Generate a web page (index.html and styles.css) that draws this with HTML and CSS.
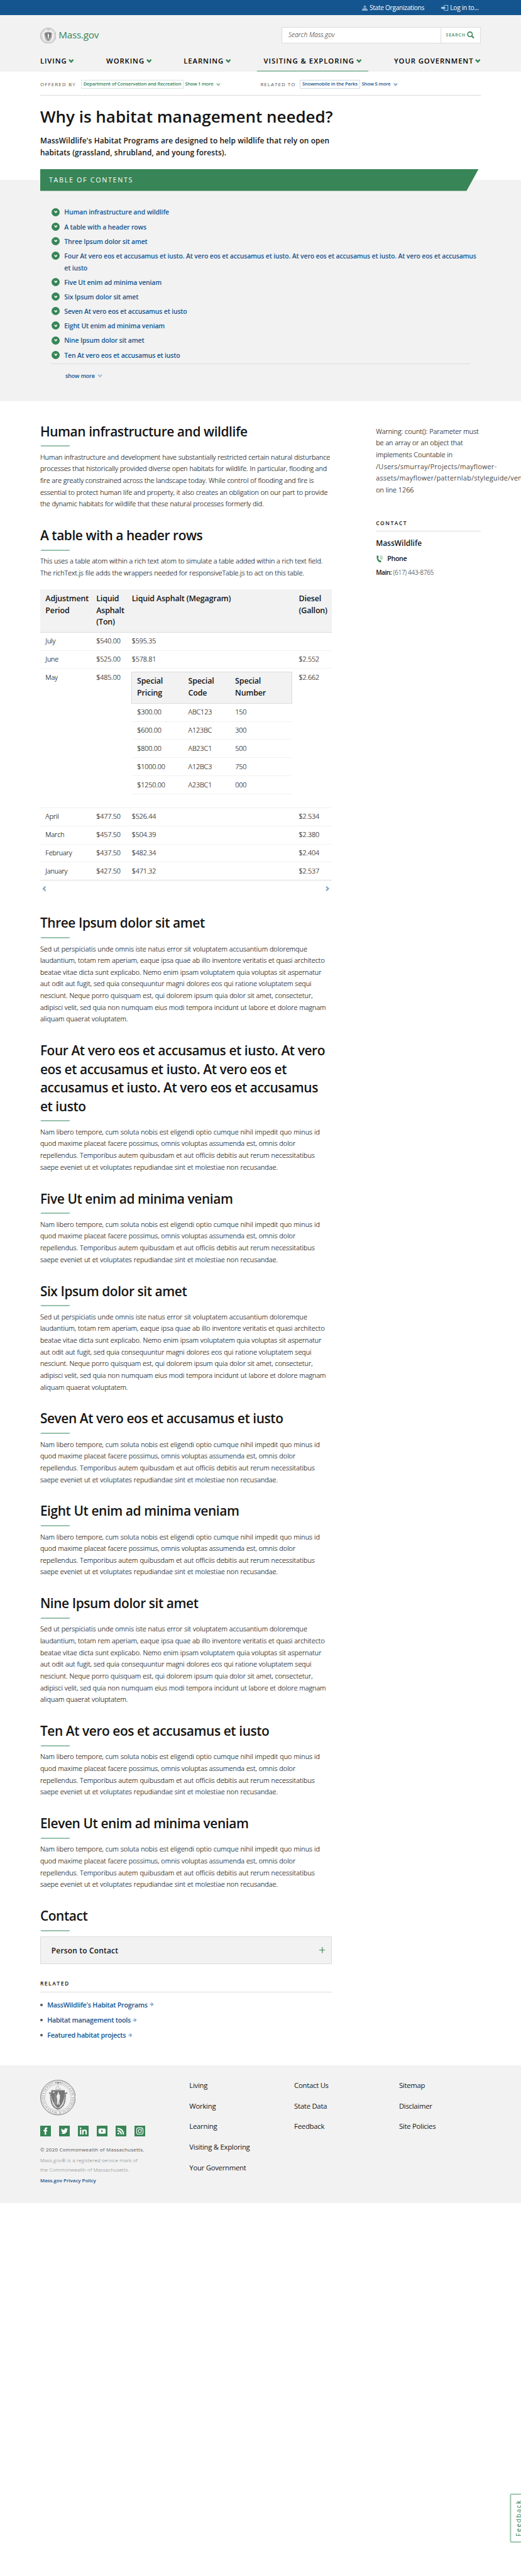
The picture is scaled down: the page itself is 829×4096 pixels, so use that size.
FILE: index.html
```html
<!DOCTYPE html>
<html lang="en">
<head>
<meta charset="utf-8">
<title>Why is habitat management needed? | Mass.gov</title>
<link rel="stylesheet" href="styles.css">
</head>
<body>
<svg class="sprite" aria-hidden="true">
  <symbol id="chev" viewBox="0 0 15 11"><path d="M0 2.6 3.2 0 7.5 4.4 11.8 0 15 2.6 7.5 11z"/></symbol>
  <symbol id="arrow" viewBox="0 0 20 18"><path d="M0 7h10L6.500 3.500 9.500 0 20 9 9.500 18l-3-3.500L10 11H0z"/></symbol>
</svg>

<div class="topbar">
  <a class="topbar-org"><svg viewBox="0 0 16 16"><path d="M7.500 0h1v2h-1zM5 5.500Q5 2 8 2t3 3.500zM4 6h8v1.300H4zM4 8h8v2H4zM1 10.800h14v1.500H1zM0 12.800h16V16H0z"/><path d="M6 8v2M8 8v2M10 8v2M3 13v2M5.500 13v2M8 13v2M10.500 13v2M13 13v2" stroke="#14558f" stroke-width=".7"/></svg>State Organizations</a>
  <a class="topbar-login"><svg viewBox="0 0 20 16"><path d="M0 5.500h6V2l7 6-7 6v-3.500H0z"/><path d="M8 1h11v14H8" fill="none" stroke="#a9c4dd" stroke-width="1.800"/></svg>Log in to...</a>
</div>

<header class="header">
  <div class="brand-row">
    <a class="brand"><svg viewBox="0 0 100 100"><use href="#seal"/></svg>Mass.gov</a>
    <form class="search"><span class="search-field">Search Mass.gov</span><span class="search-btn">SEARCH<svg viewBox="0 0 21 20"><circle cx="8.500" cy="8" r="6.500" fill="none" stroke="#388557" stroke-width="2.800"/><path d="M13 12.500l6.500 6" stroke="#388557" stroke-width="3.600"/></svg></span></form>
  </div>
  <nav class="nav">
    <a>LIVING<svg class="chev"><use href="#chev"/></svg></a>
    <a>WORKING<svg class="chev"><use href="#chev"/></svg></a>
    <a>LEARNING<svg class="chev"><use href="#chev"/></svg></a>
    <a class="is-active">VISITING &amp; EXPLORING<svg class="chev"><use href="#chev"/></svg></a>
    <a>YOUR GOVERNMENT<svg class="chev"><use href="#chev"/></svg></a>
  </nav>
</header>

<div class="relations">
  <div class="rel rel-offered"><span class="rel-label">OFFERED BY</span><a class="rel-tag">Department of Conservation and Recreation</a><span class="rel-more">Show 1 more</span><svg class="chev"><use href="#chev"/></svg></div>
  <div class="rel rel-to"><span class="rel-label">RELATED TO</span><a class="rel-tag">Snowmobile in the Parks</a><span class="rel-more">Show 5 more</span><svg class="chev"><use href="#chev"/></svg></div>
</div>

<div class="intro">
  <h1>Why is habitat management needed?</h1>
  <p>MassWildlife's Habitat Programs are designed to help wildlife that rely on open<br>habitats (grassland, shrubland, and young forests).</p>
</div>

<section class="toc">
  <h2 class="toc-title">TABLE OF CONTENTS</h2>
  <ul class="toc-list">
    <li><i><svg><use href="#chev"/></svg></i><a>Human infrastructure and wildlife</a></li>
    <li><i><svg><use href="#chev"/></svg></i><a>A table with a header rows</a></li>
    <li><i><svg><use href="#chev"/></svg></i><a>Three Ipsum dolor sit amet</a></li>
    <li><i><svg><use href="#chev"/></svg></i><a>Four At vero eos et accusamus et iusto. At vero eos et accusamus et iusto. At vero eos et accusamus et iusto. At vero eos et accusamus<br>et iusto</a></li>
    <li><i><svg><use href="#chev"/></svg></i><a>Five Ut enim ad minima veniam</a></li>
    <li><i><svg><use href="#chev"/></svg></i><a>Six Ipsum dolor sit amet</a></li>
    <li><i><svg><use href="#chev"/></svg></i><a>Seven At vero eos et accusamus et iusto</a></li>
    <li><i><svg><use href="#chev"/></svg></i><a>Eight Ut enim ad minima veniam</a></li>
    <li><i><svg><use href="#chev"/></svg></i><a>Nine Ipsum dolor sit amet</a></li>
    <li><i><svg><use href="#chev"/></svg></i><a>Ten At vero eos et accusamus et iusto</a></li>
  </ul>
  <a class="toc-more">show more<svg><use href="#chev"/></svg></a>
</section>

<div class="content">
  <main class="main">
    <section>
      <h2>Human infrastructure and wildlife</h2>
      <p class="human">Human infrastructure and development have substantially restricted certain natural disturbance<br>processes that historically provided diverse open habitats for wildlife. In particular, flooding and<br>fire are greatly constrained across the landscape today. While control of flooding and fire is<br>essential to protect human life and property, it also creates an obligation on our part to provide<br>the dynamic habitats for wildlife that these natural processes formerly did.</p>
    </section>
    <section class="table-section">
      <h2>A table with a header rows</h2>
      <p class="human">This uses a table atom within a rich text atom to simulate a table added within a rich text field.<br>The richText.js file adds the wrappers needed for responsiveTable.js to act on this table.</p>
      <table class="prices">
        <thead><tr><th>Adjustment<br>Period</th><th>Liquid<br>Asphalt<br>(Ton)</th><th>Liquid Asphalt (Megagram)</th><th>Diesel<br>(Gallon)</th></tr></thead>
        <tbody>
          <tr><td>July</td><td>$540.00</td><td>$595.35</td><td></td></tr>
          <tr><td>June</td><td>$525.00</td><td>$578.81</td><td>$2.552</td></tr>
          <tr class="tall"><td>May</td><td>$485.00</td><td class="nest">
            <table class="special">
              <thead><tr><th>Special<br>Pricing</th><th>Special<br>Code</th><th>Special<br>Number</th></tr></thead>
              <tbody>
                <tr><td>$300.00</td><td>ABC123</td><td>150</td></tr>
                <tr><td>$600.00</td><td>A123BC</td><td>300</td></tr>
                <tr><td>$800.00</td><td>AB23C1</td><td>500</td></tr>
                <tr><td>$1000.00</td><td>A12BC3</td><td>750</td></tr>
                <tr><td>$1250.00</td><td>A23BC1</td><td>000</td></tr>
              </tbody>
            </table></td><td>$2.662</td></tr>
          <tr><td>April</td><td>$477.50</td><td>$526.44</td><td>$2.534</td></tr>
          <tr><td>March</td><td>$457.50</td><td>$504.39</td><td>$2.380</td></tr>
          <tr><td>February</td><td>$437.50</td><td>$482.34</td><td>$2.404</td></tr>
          <tr><td>January</td><td>$427.50</td><td>$471.32</td><td>$2.537</td></tr>
        </tbody>
      </table>
      <div class="scroller"><svg class="prev"><use href="#chev"/></svg><svg class="next"><use href="#chev"/></svg></div>
    </section>
    <section>
      <h2>Three Ipsum dolor sit amet</h2>
      <p class="sed">Sed ut perspiciatis unde omnis iste natus error sit voluptatem accusantium doloremque<br>laudantium, totam rem aperiam, eaque ipsa quae ab illo inventore veritatis et quasi architecto<br>beatae vitae dicta sunt explicabo. Nemo enim ipsam voluptatem quia voluptas sit aspernatur<br>aut odit aut fugit, sed quia consequuntur magni dolores eos qui ratione voluptatem sequi<br>nesciunt. Neque porro quisquam est, qui dolorem ipsum quia dolor sit amet, consectetur,<br>adipisci velit, sed quia non numquam eius modi tempora incidunt ut labore et dolore magnam<br>aliquam quaerat voluptatem.</p>
    </section>
    <section>
      <h2>Four At vero eos et accusamus et iusto. At vero<br>eos et accusamus et iusto. At vero eos et<br>accusamus et iusto. At vero eos et accusamus<br>et iusto</h2>
      <p class="nam">Nam libero tempore, cum soluta nobis est eligendi optio cumque nihil impedit quo minus id<br>quod maxime placeat facere possimus, omnis voluptas assumenda est, omnis dolor<br>repellendus. Temporibus autem quibusdam et aut officiis debitis aut rerum necessitatibus<br>saepe eveniet ut et voluptates repudiandae sint et molestiae non recusandae.</p>
    </section>
    <section>
      <h2>Five Ut enim ad minima veniam</h2>
      <p class="nam">Nam libero tempore, cum soluta nobis est eligendi optio cumque nihil impedit quo minus id<br>quod maxime placeat facere possimus, omnis voluptas assumenda est, omnis dolor<br>repellendus. Temporibus autem quibusdam et aut officiis debitis aut rerum necessitatibus<br>saepe eveniet ut et voluptates repudiandae sint et molestiae non recusandae.</p>
    </section>
    <section>
      <h2>Six Ipsum dolor sit amet</h2>
      <p class="sed">Sed ut perspiciatis unde omnis iste natus error sit voluptatem accusantium doloremque<br>laudantium, totam rem aperiam, eaque ipsa quae ab illo inventore veritatis et quasi architecto<br>beatae vitae dicta sunt explicabo. Nemo enim ipsam voluptatem quia voluptas sit aspernatur<br>aut odit aut fugit, sed quia consequuntur magni dolores eos qui ratione voluptatem sequi<br>nesciunt. Neque porro quisquam est, qui dolorem ipsum quia dolor sit amet, consectetur,<br>adipisci velit, sed quia non numquam eius modi tempora incidunt ut labore et dolore magnam<br>aliquam quaerat voluptatem.</p>
    </section>
    <section>
      <h2>Seven At vero eos et accusamus et iusto</h2>
      <p class="nam">Nam libero tempore, cum soluta nobis est eligendi optio cumque nihil impedit quo minus id<br>quod maxime placeat facere possimus, omnis voluptas assumenda est, omnis dolor<br>repellendus. Temporibus autem quibusdam et aut officiis debitis aut rerum necessitatibus<br>saepe eveniet ut et voluptates repudiandae sint et molestiae non recusandae.</p>
    </section>
    <section>
      <h2>Eight Ut enim ad minima veniam</h2>
      <p class="nam">Nam libero tempore, cum soluta nobis est eligendi optio cumque nihil impedit quo minus id<br>quod maxime placeat facere possimus, omnis voluptas assumenda est, omnis dolor<br>repellendus. Temporibus autem quibusdam et aut officiis debitis aut rerum necessitatibus<br>saepe eveniet ut et voluptates repudiandae sint et molestiae non recusandae.</p>
    </section>
    <section>
      <h2>Nine Ipsum dolor sit amet</h2>
      <p class="sed">Sed ut perspiciatis unde omnis iste natus error sit voluptatem accusantium doloremque<br>laudantium, totam rem aperiam, eaque ipsa quae ab illo inventore veritatis et quasi architecto<br>beatae vitae dicta sunt explicabo. Nemo enim ipsam voluptatem quia voluptas sit aspernatur<br>aut odit aut fugit, sed quia consequuntur magni dolores eos qui ratione voluptatem sequi<br>nesciunt. Neque porro quisquam est, qui dolorem ipsum quia dolor sit amet, consectetur,<br>adipisci velit, sed quia non numquam eius modi tempora incidunt ut labore et dolore magnam<br>aliquam quaerat voluptatem.</p>
    </section>
    <section>
      <h2>Ten At vero eos et accusamus et iusto</h2>
      <p class="nam">Nam libero tempore, cum soluta nobis est eligendi optio cumque nihil impedit quo minus id<br>quod maxime placeat facere possimus, omnis voluptas assumenda est, omnis dolor<br>repellendus. Temporibus autem quibusdam et aut officiis debitis aut rerum necessitatibus<br>saepe eveniet ut et voluptates repudiandae sint et molestiae non recusandae.</p>
    </section>
    <section>
      <h2>Eleven Ut enim ad minima veniam</h2>
      <p class="nam">Nam libero tempore, cum soluta nobis est eligendi optio cumque nihil impedit quo minus id<br>quod maxime placeat facere possimus, omnis voluptas assumenda est, omnis dolor<br>repellendus. Temporibus autem quibusdam et aut officiis debitis aut rerum necessitatibus<br>saepe eveniet ut et voluptates repudiandae sint et molestiae non recusandae.</p>
    </section>
    <section>
      <h2>Contact</h2>
      <div class="accordion">Person to Contact<svg viewBox="0 0 17 17"><path d="M8.500 0v17M0 8.500h17" stroke="#388557" stroke-width="2"/></svg></div>
    </section>
    <h3 class="related-title">RELATED</h3>
    <ul class="related">
      <li><a>MassWildlife's Habitat Programs<svg><use href="#arrow"/></svg></a></li>
      <li><a>Habitat management tools<svg><use href="#arrow"/></svg></a></li>
      <li><a>Featured habitat projects<svg><use href="#arrow"/></svg></a></li>
    </ul>
  </main>
  <aside class="side">
    <p>Warning: count(): Parameter must<br>be an array or an object that<br>implements Countable in<br><span class="path">/Users/smurray/Projects/mayflower-<br>assets/mayflower/patternlab/styleguide/vendor</span><br>on line 1266</p>
    <h3>CONTACT</h3>
    <h4>MassWildlife</h4>
    <h5><svg viewBox="0 0 19 20"><path d="M1 1.500Q3-.5 5 1l1.500 4.500-2 1.500q.5 4 4 7l2.500-.5 3 4q-1 2.500-4 2.500Q5 19 2 12 0 6 1 1.500z"/><path d="M10 8q2 .5 1.500 3M10 4.500q5 1 4.800 7M10 1q8.500 1.500 8 11" fill="none" stroke="#388557" stroke-width="1.200"/></svg>Phone</h5>
    <div class="tel"><b>Main:</b> <span>(617) 443-8765</span></div>
  </aside>
</div>

<footer class="footer">
  <div class="foot-brand">
    <svg class="foot-seal" viewBox="0 0 100 100">
      <g id="seal">
        <circle cx="50" cy="50" r="49" fill="none" stroke="#777" stroke-width="1.600"/>
        <circle cx="50" cy="50" r="46.500" fill="none" stroke="#777" stroke-width=".6"/>
        <circle cx="50" cy="50" r="37" fill="none" stroke="#888" stroke-width="1.300" stroke-dasharray="1 .6"/>
        <path id="ring" d="M58.500 11.400A39.500 39.500 0 1 1 41.500 11.400" fill="none"/>
        <text class="seal-text"><textPath href="#ring" textLength="226">SIGILLUM REIPUBLICÆ MASSACHUSETTENSIS</textPath></text>
        <path d="M40 8.500l5-2v1.500h10V6.500l5 2-5 2V9H45v1.500z" fill="#777"/>
        <circle cx="50" cy="8.500" r="2.600" fill="#777"/>
        <path d="M43 26q3-9 7-10 3 3 1 6l8 4" fill="none" stroke="#aaa" stroke-width="1.300"/>
        <path d="M44 27h12" stroke="#777" stroke-width="1.500" stroke-dasharray="3 1.500"/>
        <path d="M31 29h38q1 36-19 51Q30 65 31 29z" fill="#777"/>
        <path d="M25 37l5 1q-1 25 6 34 6 9 14 10 8-1 14-10 7-9 6-34l6-1" fill="none" stroke="#777" stroke-width="4" stroke-dasharray="4 .7"/>
        <path d="M38 32l1 2.200h2.200l-1.700 1.400.6 2.200-2.100-1.300-2.100 1.300.6-2.200-1.700-1.400H37zM50 33l2.500 3-1 3 4 3v12l-2 3 1 13h-3l-1-11-1 11h-3l1-14-2-11 3-4z" fill="#eee"/>
        <path d="M42 40v29" stroke="#ddd" stroke-width=".9"/>
      </g>
    </svg>
    <div class="social">
      <a><svg viewBox="0 0 30 30"><path d="M12.500 25V16H9.500v-4h3V9.500Q12.500 5 17 5h2.700v3.800h-1.800q-1.200 0-1.200 1.400V12h3l-.4 4h-2.600v9z"/></svg></a>
      <a><svg viewBox="0 0 30 30"><path d="M5.500 21.300q3.200.2 5.500-1.700-2.900-.3-3.700-2.800h1.700Q6 15.700 6 12.700l1.700.5Q5.200 11 6.700 8q3.300 3.900 8.200 4.200Q14.500 7 18.700 7q1.700 0 2.900 1.300L24 7.300q-.4 1.400-1.600 2.200l2.200-.6q-.8 1.300-1.900 2.100.1 7-5.300 10.500-5.700 3.400-11.900-.2z"/></svg></a>
      <a><svg viewBox="0 0 30 30"><circle cx="7.500" cy="7" r="2.300"/><path d="M5.600 11h3.800v13.700H5.600zM12 11h3.700v2q1.200-2.200 4-2.200 5.300 0 5.300 6v7.900h-3.900v-7.200q0-3.300-2.400-3.300-2.800 0-2.800 3.400v7.100H12z"/></svg></a>
      <a><svg viewBox="0 0 30 30"><rect x="5" y="8" width="20" height="14.500" rx="4"/><path d="M12.500 11.500v7l6-3.500z" fill="#388557"/></svg></a>
      <a><svg viewBox="0 0 30 30"><circle cx="7.800" cy="22" r="2.600"/><path d="M5.200 13.700q10.200.6 10.800 10.900M5.200 7.500q16.500 1 17 17.100" fill="none" stroke="#fff" stroke-width="3.700"/></svg></a>
      <a><svg viewBox="0 0 30 30"><rect x="6" y="6" width="18" height="18" rx="5" fill="none" stroke="#fff" stroke-width="1.900"/><circle cx="15" cy="15" r="4.400" fill="none" stroke="#fff" stroke-width="1.900"/><circle cx="20" cy="10" r="1.200"/></svg></a>
    </div>
    <p class="copy">© 2020 Commonwealth of Massachusetts.</p>
    <p class="mark">Mass.gov® is a registered service mark of<br>the Commonwealth of Massachusetts.</p>
    <a class="policy">Mass.gov Privacy Policy</a>
  </div>
  <ul class="foot-links"><li>Living</li><li>Working</li><li>Learning</li><li>Visiting &amp; Exploring</li><li>Your Government</li></ul>
  <ul class="foot-links"><li>Contact Us</li><li>State Data</li><li>Feedback</li></ul>
  <ul class="foot-links"><li>Sitemap</li><li>Disclaimer</li><li>Site Policies</li></ul>
</footer>
<a class="feedback">Feedback</a>
</body>
</html>
```
FILE: styles.css
```css
html{font-size:5.654px}
*{box-sizing:border-box;margin:0;padding:0}
body{position:relative;height:4096px;overflow:hidden;background:#fff;color:#141414;font-family:"Open Sans",sans-serif;font-size:1.9rem;white-space:nowrap}
ul{list-style:none}
svg{display:block;flex:none}
.sprite{position:absolute;width:0;height:0}

.topbar{display:grid;grid-template-columns:22.4rem 12rem;padding-left:101.8rem;height:4.3rem;background:#14558f;color:#fff;font-size:1.8rem;line-height:4.5rem;letter-spacing:-.029em}
.topbar a{display:flex;align-items:center}
.topbar svg{fill:#a9c4dd}
.topbar-org svg{width:1.6rem;height:1.6rem;margin-right:.6rem}
.topbar-login svg{width:2rem;height:1.6rem;margin-right:.5rem}

.header{height:15.9rem;padding:3.3rem 0 0 11.3rem;background:#f2f2f2}
.brand-row{display:flex;justify-content:space-between;width:124rem;height:4.6rem}
.brand{display:flex;color:#388557;font-size:2.7rem;line-height:4.3rem;letter-spacing:-.0156em}
.brand svg{width:4.5rem;height:4.5rem;margin:.1rem .7rem 0 0}
.search{display:flex;width:56rem;border:.2rem solid #dcdcdc;background:#fff;line-height:4.2rem}
.search-field{flex:1;padding-left:1.7rem;font-size:1.8rem;font-weight:300;font-style:italic;letter-spacing:.005em}
.search-btn{display:flex;align-items:center;width:11.2rem;padding-left:1.4rem;border-left:.2rem solid #dcdcdc;color:#388557;font-size:1.2rem;font-weight:600;letter-spacing:.133em}
.search-btn svg{width:2.1rem;height:2rem;margin-left:.4rem}
.nav{display:grid;grid-template-columns:18.6rem 21.8rem 22.5rem 36.7rem 25rem;padding-top:3.9rem}
.nav a{position:relative;display:flex;align-items:center;color:#000;font-size:2rem;font-weight:600;line-height:2rem;letter-spacing:.082em}
.nav .chev{width:1.5rem;height:1.1rem;margin-left:.5rem;fill:#388557}
.nav .is-active{letter-spacing:.0895em}
.is-active::after{content:"";position:absolute;left:-1.8rem;top:3.8rem;width:31.3rem;height:.3rem;background:#97c1aa;transform:skewX(-20deg)}

.relations{display:flex;width:124rem;height:6.7rem;margin-left:11.3rem;padding-top:2.3rem;border-bottom:.2rem solid #dcdcdc;font-size:1.35rem}
.rel{display:flex;height:2.5rem}
.rel-offered{width:62rem}
.rel-label{width:11.5rem;color:#535353;font-size:1.4rem;line-height:2.700rem;letter-spacing:.146em}
.rel-to .rel-label{width:11.1rem;letter-spacing:.133em}
.rel-tag{display:block;width:28.8rem;padding-left:.5rem;border:.2rem solid #d5e6dc;color:#388557;font-weight:600;line-height:2.1rem;letter-spacing:-.023em}
.rel-to .rel-tag{width:16.9rem;border-color:#cddce9;letter-spacing:-.017em}
.rel-more{width:8.7rem;margin-left:.5rem;color:#388557;font-weight:600;line-height:2.4rem;letter-spacing:-.036em}
.rel-to .rel-tag,.rel-to .rel-more{color:#14558f}
.rel-to .rel-more{width:9rem;letter-spacing:-.022em}
.rel .chev{width:1.2rem;height:.9rem;margin-top:.8rem;fill:#97c1aa}
.rel-to .chev{fill:#89aac7}

.intro{height:20.6rem;padding:4rem 0 0 11.3rem}
.intro h1{font-size:4.6rem;font-weight:600;line-height:3.600rem}
.intro p{margin-top:3.350rem;font-size:2.1rem;font-weight:600;line-height:3.3rem;letter-spacing:.01em}

.toc{height:65.3rem;background:linear-gradient(#fff 3rem,#f2f2f2 3rem)}
.toc-title{width:123.4rem;height:6.2rem;margin-left:11.3rem;padding-left:2.5rem;background:#388557;clip-path:polygon(0 0,100% 0,120rem 100%,0 100%);color:#fff;font-size:1.9rem;font-weight:400;line-height:6.3rem;letter-spacing:.156em}
.toc-list{width:117.8rem;margin-left:14.4rem;padding:4rem 0 .2rem;border-bottom:.2rem solid #dcdcdc}
.toc-list li{display:flex;padding:.4rem 0}
.toc-list i{display:grid;place-items:center;flex:none;width:2.300rem;height:2.300rem;margin:.4rem 1.3rem 0 .1rem;border-radius:50%;background:#388557}
.toc-list svg{width:1rem;height:.75rem;fill:#fff}
.toc-list a{color:#14558f;font-size:1.85rem;font-weight:600;line-height:3.3rem;letter-spacing:-.0145em}
.toc-more{display:flex;align-items:center;margin:2.150rem 0 0 18.4rem;color:#14558f;font-size:1.6rem;font-weight:600;line-height:2.4rem;letter-spacing:-.022em}
.toc-more svg{width:1.4rem;height:1rem;margin:.3rem 0 0 .8rem;fill:#abc3d8}

.content{display:flex;gap:12.5rem;height:468.1rem;padding:5.83rem 0 0 11.3rem}
.main{flex:none;width:82rem}
.main h2{padding-top:.15rem;font-size:3.7rem;font-weight:600;line-height:5.2rem;letter-spacing:-.02em}
.main h2::after{content:"";display:block;width:8.2rem;height:.3rem;margin:1.25rem 0 1.4rem .2rem;background:#97c1aa;transform:skewX(-25deg)}
.main p{padding-bottom:4.5rem;font-weight:300;line-height:3.3rem}
.main p,.side p,.prices td{-webkit-text-stroke:.15px #141414}
.human{letter-spacing:-.001em}
.sed{letter-spacing:.0025em}
.nam{letter-spacing:.0045em}

.table-section{height:109rem}
.main .table-section p{padding-bottom:2.960rem}
.prices,.special,.prices thead,.prices tbody{display:block}
.prices tr{display:grid;grid-template-columns:14.3rem 10rem 47rem 10.7rem;height:5.1rem;border-bottom:.2rem solid #f2f2f2}
.prices thead tr{height:12.1rem;border-bottom:.3rem solid #dcdcdc;background:#f2f2f2}
.prices th{padding:1rem 0 0 1.5rem;font-size:2.2rem;font-weight:600;line-height:3.3rem;letter-spacing:-.0105em;text-align:left}
.prices td{padding:.8rem 0 0 1.5rem;font-weight:300;line-height:3.3rem;letter-spacing:-.01em}
.prices .tall{height:39.2rem}
.prices tbody tr:last-child{border-color:#dcdcdc}
.prices .nest{padding:.8rem 0 0 1.3rem}
.special{width:45.3rem}
.prices .special tr{grid-template-columns:14.4rem 13.2rem 15rem;margin:0 .2rem}
.prices .special tbody tr:last-child{border-color:#f2f2f2}
.prices .special thead tr{height:9rem;margin:0;border:.2rem solid #dcdcdc;border-bottom-width:.3rem}
.prices .special th{padding-top:.9rem;-webkit-text-stroke:0}
.scroller{display:flex;justify-content:space-between;padding:1.8rem .4rem 0}
.scroller svg{width:1.500rem;height:1.100rem;fill:#89aac7}
.prev{transform:rotate(90deg)}
.next{transform:rotate(-90deg)}

.accordion{display:flex;align-items:center;justify-content:space-between;height:7.7rem;margin-top:1.6rem;padding:0 1.6rem 0 3rem;border:.2rem solid #dcdcdc;background:#f2f2f2;font-size:2.1rem;font-weight:600;letter-spacing:.0197em}
.accordion svg{width:1.7rem;height:1.7rem}
.related-title{margin-top:4.5rem;padding-bottom:1.2rem;border-bottom:.2rem solid #dcdcdc;font-size:1.5rem;font-weight:600;line-height:2rem;letter-spacing:.18em}
.related{margin-top:1.4rem}
.related li{display:flex;align-items:center;height:4.3rem}
.related li::before{content:"";width:.7rem;height:.7rem;margin-right:1.3rem;border-radius:50%;background:#535353}
.related a{display:flex;align-items:center;color:#14558f;font-weight:600;letter-spacing:-.024em}
.related svg{width:1.2rem;height:1.1rem;margin-left:.6rem;fill:#89aac7}

.side{width:29.5rem;flex:none;padding-top:1.07rem}
.side p{font-weight:300;line-height:3.3rem;letter-spacing:.004em}
.path{letter-spacing:.05em}
.side h3{margin-top:6.6rem;padding-bottom:1.2rem;border-bottom:.2rem solid #dcdcdc;font-size:1.5rem;font-weight:600;line-height:2rem;letter-spacing:.18em}
.side h4{margin-top:1.9rem;font-size:2.1rem;font-weight:600;line-height:2.6rem;letter-spacing:.005em}
.side h5{display:flex;align-items:center;margin-top:1.86rem;font-size:1.9rem;font-weight:600;line-height:2.6rem;letter-spacing:-.035em}
.side h5 svg{width:1.9rem;height:2rem;margin:.2rem 1.2rem 0 .1rem;fill:#388557}
.tel{margin-top:1.3rem;font-size:1.8rem;line-height:2.6rem;font-weight:300}
.tel b{font-weight:600;letter-spacing:-.05em}
.tel span{letter-spacing:-.0347em}

.footer{display:grid;grid-template-columns:42rem 29.5rem 29.5rem 20rem;height:38.7rem;padding:4rem 0 0 11.3rem;background:#f2f2f2}
.foot-seal{width:10rem;height:10rem}
.seal-text{font-family:"Liberation Serif",serif;font-size:8.5px;letter-spacing:0;fill:#777}
.social{display:flex;gap:2.3rem;margin-top:3rem}
.social svg{width:3rem;height:3rem;background:#388557;fill:#fff}
.copy{margin-top:2.400rem;color:#535353;font-size:1.4rem;font-weight:500;line-height:2.6rem;letter-spacing:.0348em}
.mark{margin-top:.4rem;color:#707070;font-size:1.4rem;font-weight:300;line-height:2.6rem;letter-spacing:.0244em}
.policy{display:block;margin-top:.4rem;color:#14558f;font-size:1.4rem;font-weight:600;line-height:2.6rem;letter-spacing:0}
.foot-links{padding-top:.2rem}
.foot-links li{height:5.78rem;font-size:2rem;font-weight:500;line-height:2.8rem;letter-spacing:-.022em}

.feedback{position:absolute;right:-.5rem;top:701.2rem;width:3.6rem;height:13.8rem;padding-right:1rem;border:.4rem solid #9cc5ae;border-radius:.5rem;color:#388557;font-size:1.8rem;line-height:2.2rem;letter-spacing:.17em;text-align:center;writing-mode:vertical-rl;transform:rotate(180deg)}
```
